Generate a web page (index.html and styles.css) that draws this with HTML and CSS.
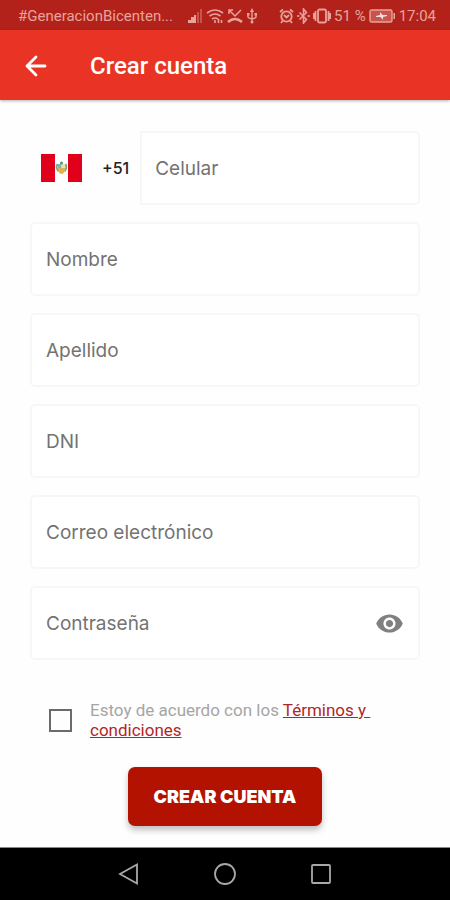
FILE: index.html
```
<!DOCTYPE html>
<html lang="es">
<head>
    <meta charset="UTF-8">
    <meta name="viewport" content="width=device-width, initial-scale=1.0">
    <title>Crear cuenta</title>
    <link rel="stylesheet" href="styles.css">
</head>
<body>
    <!-- Barra de estado -->
    <div class="status-bar">
        <span class="carrier">#GeneracionBicenten...</span>
        <div class="status-icons">
            <svg width="16" height="16" viewBox="0 0 16 16" fill="currentColor"><path d="M1 12h3v3H1zM4 9h3v6H4zM7 7h2v8H7z"/><path opacity=".4" d="M10 4h2v11h-2zM13 1h2v14h-2z"/></svg>
            <svg width="18" height="16" viewBox="0 0 18 16" fill="none" stroke="currentColor" stroke-width="1.6"><path d="M1 5q8-6 16 0M3.500 8q5.500-4 11 0M6 11q3-2 6 0"/><path d="M9 12v3M12.500 11v4M15.500 12v3"/></svg>
            <svg width="16" height="16" viewBox="0 0 16 16" fill="none" stroke="currentColor" stroke-width="1.5"><path d="M2 6V2h4M2 2l6 6 6-6"/><path stroke-width="2.600" d="M1 14q7-6 14 0"/></svg>
            <svg width="12" height="16" viewBox="0 0 12 16" fill="none" stroke="currentColor" stroke-width="1.4"><path d="M6 2v11M2 6v3q0 1 4 2 4-1 4-2V6"/><path fill="currentColor" stroke="none" d="M6 0l2 4H4zM1 5h2.500v2.500H1zM8.500 5H11v2.500H8.500z"/><circle cx="6" cy="14" r="1.500" fill="currentColor" stroke="none"/></svg>
        </div>
        <div class="status-icons status-right">
            <svg width="15" height="16" viewBox="0 0 15 16" fill="none" stroke="currentColor" stroke-width="1.8"><circle cx="7.500" cy="8.500" r="5.200"/><path d="M1 4l3-2.500M14 4l-3-2.500M5 7l2.500 2.500L10 7M3.500 13L2 15M11.500 13l1.500 2"/></svg>
            <svg width="13" height="16" viewBox="0 0 13 16" fill="none" stroke="currentColor" stroke-width="1.6"><path d="M2.500 4.500l7 7L6.500 15V1l3 3.500-7 7"/><path d="M0 8h2.500M10.500 8H13"/></svg>
            <svg width="18" height="16" viewBox="0 0 18 16" fill="none" stroke="currentColor" stroke-width="1.8"><rect x="5" y="1.500" width="8" height="13" rx="1.500"/><path d="M2.500 3v10M15.500 3v10M.8 5v6M17.200 5v6"/></svg>
            <span>51 %</span>
            <svg class="battery" width="27" height="14" viewBox="0 0 27 14"><rect x="1" y="1" width="22" height="12" rx="1.500" fill="currentColor" fill-opacity=".4" stroke="currentColor" stroke-width="1.400"/><path fill="currentColor" d="M24.500 4H26v6h-1.500z"/><path fill="#fff" fill-opacity=".8" d="M7 7l4-1V3l2.500 3H18v1l-4 1v3l-2.500-3H7z"/></svg>
            <span>17:04</span>
        </div>
    </div>

    <header class="app-bar">
        <button type="button" class="back-button" aria-label="Volver">
            <svg width="22" height="22" viewBox="0 0 22 22" fill="none" stroke="currentColor" stroke-width="2.800" stroke-linecap="round" stroke-linejoin="round"><path d="M20 11H2M11 2l-9 9 9 9"/></svg>
        </button>
        <h1>Crear cuenta</h1>
    </header>

    <main>
        <form class="signup-form">
            <div class="phone-row">
                <svg class="flag" width="41" height="28" viewBox="0 0 41 28" role="img" aria-label="Perú">
                    <path fill="#fff" d="M0 0h41v28H0z"/>
                    <path fill="#e0001b" d="M0 0h14v28H0zM27 0h14v28H27z"/>
                    <path fill="none" stroke="#77a888" stroke-width="1.800" d="M16.500 10q-2 4 1 7.500M24.500 10q2 4-1 7.500"/>
                    <path fill="#e6b04c" d="M17 14h7v2q-1 4-3.500 4T17 16z"/>
                    <path fill="#72b8c4" d="M17 10h3.500v4H17z"/>
                    <path fill="#e8e1b8" d="M20.500 10H24v4h-3.500z"/>
                    <circle cx="20.500" cy="9" r="1.500" fill="#51985b"/>
                </svg>
                <span class="prefix">+51</span>
                <input class="field" type="tel" placeholder="Celular" aria-label="Celular">
            </div>
            <input class="field" type="text" placeholder="Nombre" aria-label="Nombre">
            <input class="field" type="text" placeholder="Apellido" aria-label="Apellido">
            <input class="field" type="text" placeholder="DNI" aria-label="DNI">
            <input class="field" type="email" placeholder="Correo electrónico" aria-label="Correo electrónico">
            <div class="field password-field">
                <input type="password" placeholder="Contraseña" aria-label="Contraseña">
                <button type="button" class="toggle-password" aria-label="Mostrar contraseña">
                    <svg width="29" height="29" viewBox="0 0 24 24" fill="currentColor"><path d="M12 4.500C7 4.500 2.730 7.610 1 12c1.730 4.390 6 7.500 11 7.500s9.270-3.110 11-7.500c-1.730-4.390-6-7.500-11-7.500zM12 17c-2.760 0-5-2.240-5-5s2.240-5 5-5 5 2.240 5 5-2.240 5-5 5zm0-8c-1.660 0-3 1.340-3 3s1.340 3 3 3 3-1.340 3-3-1.340-3-3-3z"/></svg>
                </button>
            </div>

            <div class="terms">
                <input type="checkbox" id="terms">
                <label for="terms">Estoy de acuerdo con los <a href="#">Términos y&nbsp;<br>condiciones</a></label>
            </div>

            <button type="submit" class="submit-button">CREAR CUENTA</button>
        </form>
    </main>

    <!-- Botones de navegación -->
    <nav class="nav-bar">
        <button type="button" aria-label="Atrás">
            <svg width="24" height="24" viewBox="0 0 24 24"><path d="M20 2.500v19L3 12z"/></svg>
        </button>
        <button type="button" aria-label="Inicio">
            <svg width="24" height="24" viewBox="0 0 24 24"><circle cx="12" cy="12" r="10"/></svg>
        </button>
        <button type="button" aria-label="Recientes">
            <svg width="24" height="24" viewBox="0 0 24 24"><rect x="3" y="3" width="18" height="18" rx="1"/></svg>
        </button>
    </nav>
</body>
</html>
```
FILE: styles.css
```
* {
    box-sizing: border-box;
}

body {
    font-family: Roboto, sans-serif;
    display: flex;
    flex-direction: column;
    min-height: 100vh;
    margin: 0;
    background-color: #fefefe;
}

button {
    border: none;
    padding: 0;
    background: none;
    cursor: pointer;
}

svg {
    display: block;
    flex-shrink: 0;
}

.status-bar {
    display: flex;
    align-items: center;
    height: 30px;
    padding: 2px 14px 0 18px;
    background-color: #b3221a;
    color: #e9a29b;
    font-size: 15px;
    white-space: nowrap;
}

.status-icons {
    display: flex;
    align-items: center;
    gap: 3px;
    margin-left: 14px;
}

.status-right {
    margin-left: auto;
}

.app-bar {
    display: flex;
    align-items: center;
    gap: 43px;
    height: 70px;
    padding: 2px 25px 0;
    background-color: #e93425;
    color: #fff;
    box-shadow: 0 1px 3px rgba(0, 0, 0, 0.3);
}

.app-bar h1 {
    margin: 0;
    font-size: 24px;
    font-weight: 500;
}

.back-button {
    color: #fff;
}

main {
    flex: 1;
    padding: 31px 30px 21px;
}

.signup-form {
    display: flex;
    flex-direction: column;
    gap: 17px;
}

.phone-row {
    display: flex;
    align-items: center;
}

.flag {
    margin: 0 20px 0 11px;
}

.prefix {
    margin-right: 11px;
    font-family: Inter, sans-serif;
    font-size: 16px;
    font-weight: 500;
    color: #222;
}

.field {
    width: 100%;
    min-width: 0;
    height: 74px;
    padding: 0 14px;
    border: 2px solid #f7f7f7;
    border-radius: 5px;
    background-color: #fff;
}

.phone-row .field {
    flex: 1;
    padding-left: 13px;
    border-radius: 0 5px 5px 0;
}

.field,
.password-field input {
    font-family: Inter, sans-serif;
    font-size: 19px;
    color: #333;
    outline: none;
}

.field::placeholder,
.password-field input::placeholder {
    color: #737373;
    opacity: 1;
}

.password-field {
    display: flex;
    align-items: center;
}

.password-field input {
    flex: 1;
    min-width: 0;
    padding: 0;
    border: none;
    background: none;
}

.toggle-password {
    color: #808080;
}

.terms {
    display: flex;
    align-items: center;
    gap: 18px;
    margin-top: 23px;
    padding-left: 19px;
}

.terms input {
    appearance: none;
    width: 23px;
    height: 23px;
    margin: 0;
    border: 2px solid #6b6b6b;
}

.terms input:checked {
    background-color: #b31200;
}

.terms label {
    font-size: 17px;
    line-height: 20px;
    color: #a5a5a5;
}

.terms a {
    color: #b3261e;
}

.submit-button {
    align-self: center;
    height: 59px;
    margin-top: 10px;
    padding: 0 26px;
    border-radius: 7px;
    background-color: #b31200;
    color: #fff;
    font-family: Inter, sans-serif;
    font-size: 18px;
    font-weight: 900;
    box-shadow: 0 4px 6px rgba(0, 0, 0, 0.25);
}

.nav-bar {
    display: flex;
    justify-content: center;
    gap: 72px;
    height: 53px;
    border-top: 1px solid #888;
    background-color: #000;
}

.nav-bar svg {
    fill: none;
    stroke: #a8a8a8;
    stroke-width: 1.800;
}
```
